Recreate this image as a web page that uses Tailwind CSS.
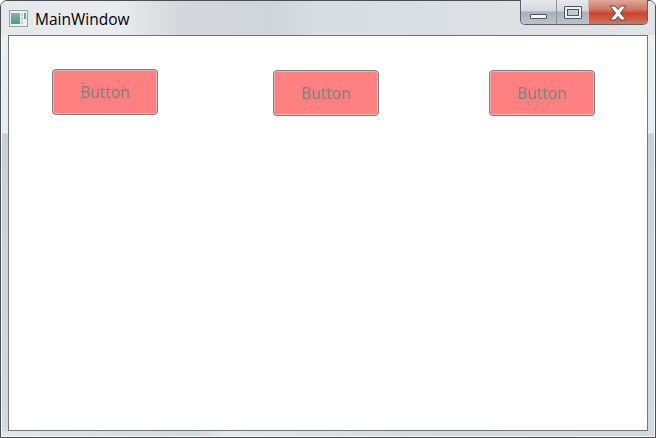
<!DOCTYPE html>
<html lang="en">
<head>
  <meta charset="UTF-8" />
  <title>MainWindow</title>
  <script src="https://cdn.jsdelivr.net/npm/@tailwindcss/browser@4"></script>
</head>
<body class="w-[656px] h-[438px] overflow-hidden bg-white font-['Open_Sans',sans-serif]">
  <!-- Window frame -->
  <div class="relative w-[656px] h-[438px] flex flex-col border border-[#4a4f55] rounded-t-[7px] shadow-[inset_0_0_0_1px_#f4f6f8] bg-[linear-gradient(to_bottom,#eef1f4_0px,#e8ebef_132px,#c9d1d7_133px,#d3dae0_100%)]">

    <!-- Title bar -->
    <div class="h-[34px] shrink-0 flex items-start pl-[8px] pt-[9px] rounded-t-[6px] bg-[linear-gradient(to_right,#e6e9ec_0%,#e9ecef_18%,#dfe3e6_22%,#d3d7db_28%,#d1d6da_42%,#d8dde2_48%,#d9dee3_62%,#dde1e4_78%,#dfe3e6_100%)]">
      <svg width="19" height="17" viewBox="0 0 19 17" class="shrink-0">
        <defs>
          <linearGradient id="appIcon" x1="0" y1="0" x2="0" y2="1">
            <stop offset="0" stop-color="#8fa9bd" />
            <stop offset="1" stop-color="#46a07c" />
          </linearGradient>
        </defs>
        <rect x="0.5" y="0.5" width="18" height="16" fill="#eef1f3" stroke="#98a0a8" />
        <rect x="2" y="3" width="9" height="11" fill="url(#appIcon)" />
        <rect x="12" y="3" width="2" height="3" fill="#c6ced1" />
        <rect x="12" y="7" width="2" height="3" fill="#ccd3d5" />
        <rect x="12" y="11" width="2" height="3" fill="#ccd3d5" />
        <rect x="15" y="3" width="2" height="6" fill="#6aa890" />
      </svg>
      <span class="ml-[7px] text-[15.5px] leading-[19px] text-black">MainWindow</span>
    </div>

    <!-- Client area -->
    <div class="ml-[7px] mr-[7px] h-[396px] shrink-0 bg-white border border-[#6f757c] pt-[33px] flex items-start">
      <button class="ml-[43px] w-[106px] h-[46px] pt-[2px] rounded-[4px] border border-[#7f7f7f] bg-[#ff8080] shadow-[inset_0_0_0_1px_#e8b4b4] text-[15.5px] text-[#7f7f7f]">Button</button>
      <button class="ml-[115px] mt-[1px] w-[106px] h-[46px] pt-[2px] rounded-[4px] border border-[#7f7f7f] bg-[#ff8080] shadow-[inset_0_0_0_1px_#e8b4b4] text-[15.5px] text-[#7f7f7f]">Button</button>
      <button class="ml-[110px] mt-[1px] w-[106px] h-[46px] pt-[2px] rounded-[4px] border border-[#7f7f7f] bg-[#ff8080] shadow-[inset_0_0_0_1px_#e8b4b4] text-[15.5px] text-[#7f7f7f]">Button</button>
    </div>

    <!-- Bottom frame strip -->
    <div class="flex-1 mx-[1px] mb-[1px] bg-[linear-gradient(to_right,#e2e6e9_0%,#d5dade_30%,#e6e9ec_34%,#d8dce0_60%,#d3d8dc_100%)]"></div>

    <!-- Caption buttons -->
    <div class="absolute top-[-1px] right-[7px] h-[25px] w-[128px] flex border border-t-0 border-[#59616b] rounded-b-[5px] overflow-hidden">
      <div class="w-[36px] flex justify-center items-start pt-[14px] border-r border-[#8a929a] bg-[linear-gradient(to_bottom,#e6e9ec_0%,#d4d8dc_45%,#aab1b9_50%,#bcc2c8_100%)]">
        <div class="w-[17px] h-[5px] bg-[#f5f6f7] border border-[#4d5560] rounded-[1px]"></div>
      </div>
      <div class="w-[32px] flex justify-center items-start pt-[6px] border-r border-[#e8b0a0] bg-[linear-gradient(to_bottom,#e6e9ec_0%,#d4d8dc_45%,#aab1b9_50%,#bcc2c8_100%)]">
        <div class="w-[18px] h-[13px] bg-[#eef0f2] border border-[#4d5560] rounded-[1px] p-[2px]">
          <div class="h-full border border-[#4d5560] bg-[#c3c9cf]"></div>
        </div>
      </div>
      <div class="flex-1 flex justify-center items-start pt-[5px] bg-[linear-gradient(to_bottom,#dba99b_0%,#d2735f_40%,#c9452f_55%,#d4553d_75%,#b9806f_100%)]">
        <svg width="20" height="16" viewBox="0 0 20 16">
          <polygon points="2,1 7,1 10,4.5 13,1 18,1 12.5,8 18,15 13,15 10,11.5 7,15 2,15 7.5,8" fill="#f3f4f5" stroke="#4d4f55" stroke-width="1" />
        </svg>
      </div>
    </div>
  </div>
</body>
</html>
